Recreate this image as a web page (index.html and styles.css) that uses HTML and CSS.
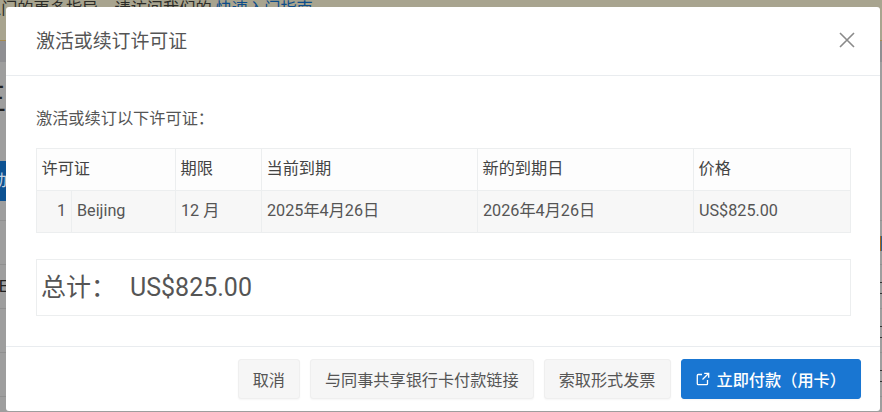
FILE: index.html
```html
<!DOCTYPE html>
<html lang="zh-CN">
<head>
    <meta charset="UTF-8">
    <meta name="viewport" content="width=device-width, initial-scale=1.0">
    <title>激活或续订许可证</title>
    <link rel="stylesheet" href="styles.css">
</head>
<body>
    <!-- 对话框后面的页面 -->
    <div class="page">
        <div class="notice">入门的更多指导，请访问我们的 <a class="notice-link">快速入门指南</a></div>
        <div class="subnav"></div>
        <div class="page-title">王</div>
        <div class="page-row page-row-btn"><span class="blue-btn">加</span></div>
        <div class="page-row page-row-tag"><span class="orange-tag"></span></div>
        <div class="page-row"><span class="cut-text">LE</span><span class="dashes"></span></div>
        <div class="page-row page-row-tag"><span class="dashes"></span></div>
        <div class="page-row page-row-tag"><span class="dashes"></span></div>
    </div>

    <div class="modal">
        <div class="modal-header">
            <h2 class="modal-title">激活或续订许可证</h2>
            <svg class="close-icon" width="16" height="16" viewBox="0 0 16 16">
                <path d="M1 1 15 15M15 1 1 15" fill="none" stroke="#8a8a8a" stroke-width="1.6"/>
            </svg>
        </div>
        <div class="modal-body">
            <p class="intro">激活或续订以下许可证：</p>
            <table class="license-table">
                <colgroup>
                    <col class="col-num">
                    <col class="col-name">
                    <col class="col-term">
                    <col class="col-date">
                    <col class="col-date">
                    <col class="col-price">
                </colgroup>
                <thead>
                    <tr>
                        <th colspan="2">许可证</th>
                        <th>期限</th>
                        <th>当前到期</th>
                        <th>新的到期日</th>
                        <th>价格</th>
                    </tr>
                </thead>
                <tbody>
                    <tr>
                        <td class="num">1</td>
                        <td>Beijing</td>
                        <td>12 月</td>
                        <td>2025年4月26日</td>
                        <td>2026年4月26日</td>
                        <td>US$825.00</td>
                    </tr>
                </tbody>
            </table>
            <div class="total"><span class="total-label">总计：</span><span>US$825.00</span></div>
        </div>
        <div class="modal-footer">
            <button class="btn">取消</button>
            <button class="btn">与同事共享银行卡付款链接</button>
            <button class="btn">索取形式发票</button>
            <button class="btn btn-pay">
                <svg class="pay-icon" width="14" height="14" viewBox="0 0 14 14">
                    <path d="M6 2.5H2.2a.9.9 0 0 0-.9.9v8.4c0 .5.4.9.9.9h8.4a.9.9 0 0 0 .9-.9V8M8.2 1.3h4.5v4.5M12.5 1.5 6.5 7.5" fill="none" stroke="#fff" stroke-width="1.3"/>
                </svg>
                立即付款（用卡）
            </button>
        </div>
    </div>
</body>
</html>
```

FILE: styles.css
```css
* {
    box-sizing: border-box;
}
body {
    margin: 0;
    height: 412px;
    overflow: hidden;
    font-family: Roboto, "Noto Sans CJK SC", sans-serif;
    font-size: 16.2px;
    color: #555;
    background-color: #9e9e9e;
}
.page {
    height: 412px;
    overflow: hidden;
}
.notice {
    height: 41px;
    background-color: #a8a48f;
    border-bottom: 1px solid #a58a4f;
    color: #2c2c28;
    line-height: 18px;
    white-space: nowrap;
    text-indent: -15px;
}
.notice-link {
    color: #0d4d8a;
}
.subnav {
    height: 21px;
    background-color: #8f8f92;
}
.page-title {
    height: 59px;
    padding-top: 22px;
    color: #222;
    font-size: 30px;
    line-height: 30px;
    text-indent: -24px;
}
.page-row {
    display: flex;
    justify-content: space-between;
    height: 44px;
    border-bottom: 1px solid #909090;
}
.page-row-tag {
    justify-content: flex-end;
}
.page-row-btn {
    height: 100px;
    padding-top: 40px;
}
.blue-btn {
    width: 6px;
    height: 40px;
    overflow: hidden;
    background-color: #0d5292;
    color: #c4d2e0;
    line-height: 40px;
    text-indent: -2px;
}
.orange-tag {
    width: 2px;
    height: 15px;
    margin-top: 15px;
    border-left: 1px solid #a5651c;
    background-color: #2f5f8f;
}
.cut-text {
    width: 6px;
    overflow: hidden;
    color: #222;
    line-height: 44px;
    text-indent: -10px;
}
.dashes {
    width: 2px;
    height: 12px;
    margin-top: 17px;
    border-top: 1px solid #333;
    border-bottom: 1px solid #333;
}
.modal {
    position: absolute;
    top: 7px;
    left: 6px;
    width: 874px;
    height: 404px;
    display: flex;
    flex-direction: column;
    background-color: #fff;
    border-radius: 3px;
}
.modal-header {
    display: flex;
    justify-content: space-between;
    align-items: center;
    height: 69px;
    padding: 0 25px 0 30px;
    border-bottom: 1px solid #e9ecef;
}
.modal-title {
    margin: 0 0 4px;
    font-size: 18.9px;
    font-weight: 400;
    color: #555;
}
.close-icon {
    margin-bottom: 2px;
}
.modal-body {
    flex: 1;
    padding: 31px 29px 0 30px;
}
.intro {
    margin: 0 0 17px;
    line-height: 24px;
    color: #555;
}
.license-table {
    width: 814px;
    table-layout: fixed;
    border-collapse: collapse;
}
.col-num {
    width: 35px;
}
.col-name {
    width: 104px;
}
.col-term {
    width: 86px;
}
.col-date {
    width: 216px;
}
.col-price {
    width: 157px;
}
.license-table th,
.license-table td {
    height: 42px;
    padding: 0 5px 1px;
    border: 1px solid #eceeef;
    line-height: 24px;
    text-align: left;
    font-weight: 400;
}
.license-table th {
    padding-left: 4.5px;
    background-color: #fdfdfd;
    color: #444;
}
.license-table td {
    background-color: #f7f7f7;
}
.license-table .num {
    text-align: right;
}
.total {
    display: flex;
    align-items: baseline;
    gap: 14px;
    width: 815px;
    height: 57px;
    margin-top: 26px;
    padding: 10px 0 0 4px;
    border: 1px solid #eceeef;
    font-size: 25px;
    line-height: 36px;
}
.modal-footer {
    display: flex;
    justify-content: flex-end;
    gap: 10px;
    height: 65px;
    padding: 12px 19px 0 0;
    border-top: 1px solid #e9ecef;
}
.btn {
    display: flex;
    align-items: center;
    height: 40px;
    padding: 0 14px;
    border: 1px solid #efefef;
    border-radius: 3px;
    background-color: #f6f6f6;
    color: #555;
    font-family: inherit;
    font-size: 16.15px;
    box-shadow: 0 1px 2px rgba(0, 0, 0, 0.04);
}
.btn-pay {
    gap: 7px;
    border-color: #1976d2;
    background-color: #1976d2;
    color: #fff;
    font-size: 16.2px;
    font-weight: 500;
}
.pay-icon {
    flex-shrink: 0;
}
```
